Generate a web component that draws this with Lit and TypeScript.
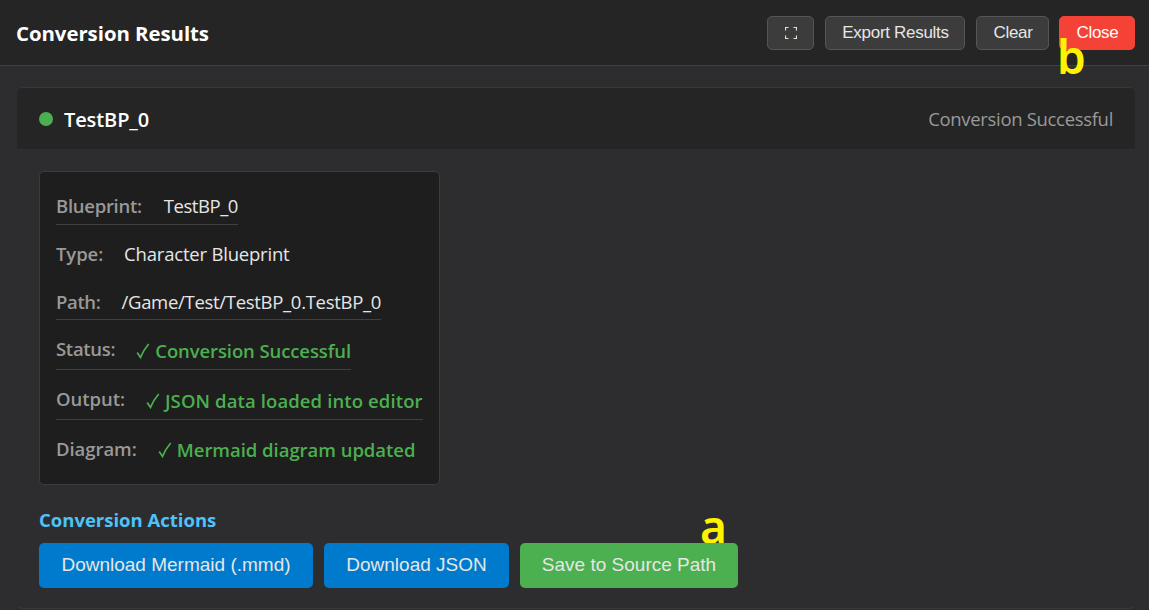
import { LitElement, html, css } from "lit";
import { customElement } from "lit/decorators.js";

interface Detail {
  key: string;
  label: string;
  value: string;
  ok?: boolean;
}

const DETAILS: Detail[] = [
  { key: "blueprint", label: "Blueprint:", value: "TestBP_0" },
  { key: "type", label: "Type:", value: "Character Blueprint" },
  { key: "path", label: "Path:", value: "/Game/Test/TestBP_0.TestBP_0" },
  { key: "status", label: "Status:", value: "Conversion Successful", ok: true },
  { key: "output", label: "Output:", value: "JSON data loaded into editor", ok: true },
  { key: "diagram", label: "Diagram:", value: "Mermaid diagram updated", ok: true },
];

@customElement("app-root")
export class AppRoot extends LitElement {
  static styles = css`
    :host { display: block; position: relative; height: 610px; overflow: hidden; background: #2d2d2f; color: #e8e8e8; font: 18.5px/24px "Open Sans", "Noto Sans", sans-serif; white-space: nowrap; }
    * { box-sizing: border-box; }
    button { font: 17px/20px "Liberation Sans", Arial, sans-serif; border: 0; margin: 0; padding: 0; border-radius: 5px; color: #e6e6e6; white-space: nowrap; }
    .top { height: 66px; padding: 16px 14px 0 16px; display: flex; align-items: flex-start; justify-content: space-between; background: #252525; border-bottom: 1px solid #404042; }
    .title { margin: 4px 0 0; font-size: 20.4px; line-height: 26px; font-weight: 700; color: #fff; letter-spacing: -0.05px; }
    .tools { display: flex; gap: 11px; }
    .tools button { height: 34px; padding: 0 0 1px 1px; background: #3c3c3c; border: 1px solid #555; letter-spacing: -0.3px; }
    .tools .full { width: 47px; display: grid; place-items: center; padding: 0 0 0 1px; }
    .tools .export { width: 140px; }
    .tools .clear { width: 73px; }
    .tools .close { width: 76px; margin-left: -1px; background: #f44336; border-color: #f44336; color: #fff; }
    .result { margin: 21px 14px 0 17px; height: 522px; border: 1px solid #39393b; border-radius: 6px; border-left-color: #2f2f31; border-right-color: #2f2f31; }
    .head { height: 61px; margin: 0 -1px; padding: 3px 22px 0 22px; display: flex; align-items: center; background: #252525; border-radius: 5px 5px 0 0; }
    .dot { width: 14px; height: 14px; border-radius: 50%; background: #4caf50; margin: 0 11px 3px 0; }
    .name { flex: 1; margin: 0; font-size: 20px; font-weight: 600; color: #fff; letter-spacing: -0.1px; }
    .state { color: #999; letter-spacing: -0.32px; padding-bottom: 2px; }
    .body { padding: 22px 21px 0; }
    .details { width: 401px; height: 314px; padding: 16px; display: flex; flex-direction: column; align-items: flex-start; gap: 11px; background: #1e1e1e; border: 1px solid #3c3c3e; border-radius: 5px; }
    .row { flex: none; display: flex; height: 37px; padding-top: 6px; border-bottom: 1px solid #404042; }
    .type, .diagram { border-bottom-color: transparent; }
    .path { height: 36px; }
    .status, .output { height: 39px; }
    .diagram { height: 36px; }
    .label { font-weight: 600; color: #999; margin-right: 21px; }
    .value { display: flex; color: #e6e6e6; }
    .blueprint .label { letter-spacing: -0.28px; margin-right: 22px; }
    .type .label { letter-spacing: -0.1px; }
    .path .label { letter-spacing: -0.35px; }
    .status .label { letter-spacing: -0.3px; }
    .output .label, .diagram .label { letter-spacing: -0.05px; }
    .blueprint .text { letter-spacing: -0.45px; }
    .type .text { letter-spacing: -0.2px; }
    .path .text { letter-spacing: -0.3px; }
    .status .text { letter-spacing: -0.1px; }
    .output .text { letter-spacing: 0.11px; }
    .diagram .text { letter-spacing: -0.03px; }
    .ok { color: #4caf50; font-weight: 600; padding-top: 2px; }
    .diagram .ok { padding-top: 1px; }
    .tick { width: 14px; height: 18px; margin: 3px 5px 0 0; }
    .sub { margin: 23px 0 11px; font-size: 18.5px; line-height: 24px; font-weight: 700; color: #4fc3f7; }
    .actions { display: flex; gap: 11px; }
    .actions button { height: 45px; background: #007acc; font-size: 19px; letter-spacing: 0; padding-bottom: 1px; }
    .actions .mermaid { width: 274px; }
    .actions .json { width: 185px; }
    .actions .save { width: 218px; background: #4caf50; position: relative; z-index: 1; }
    .mark { position: absolute; color: #fff200; font: 600 46px/54px "Noto Sans", sans-serif; }
    .mark-a { left: 700px; top: 499px; }
    .mark-b { left: 1057px; top: 29px; }
  `;

  private row(d: Detail) {
    return html`<div class="row ${d.key}">
      <span class="label">${d.label}</span>
      <span class="value ${d.ok ? "ok" : ""}">${d.ok
        ? html`<svg class="tick" viewBox="0 0 14 18"><path d="M1.2 10.5 L4.5 15.4 Q7.5 8 12.7 2" fill="none" stroke="currentColor" stroke-width="1.7"/></svg>`
        : ""}<span class="text">${d.value}</span></span>
    </div>`;
  }

  render() {
    return html`
      <header class="top">
        <h1 class="title">Conversion Results</h1>
        <div class="tools">
          <button class="full" aria-label="Full screen">
            <svg width="12" height="12" viewBox="0 0 12 12" fill="none" stroke="#e6e0d0" stroke-width="1.2"><path d="M.5 3.5v-3h3M8.5.5h3v3M11.5 8.5v3h-3M3.5 11.5h-3v-3"/></svg>
          </button>
          <button class="export">Export Results</button>
          <button class="clear">Clear</button>
          <button class="close">Close</button>
        </div>
      </header>
      <section class="result">
        <div class="head"><span class="dot"></span><h2 class="name">TestBP_0</h2><span class="state">Conversion Successful</span></div>
        <div class="body">
          <div class="details">${DETAILS.map((d) => this.row(d))}</div>
          <h3 class="sub">Conversion Actions</h3>
          <div class="actions">
            <button class="mermaid">Download Mermaid (.mmd)</button>
            <button class="json">Download JSON</button>
            <button class="save">Save to Source Path</button>
          </div>
        </div>
      </section>
      <span class="mark mark-a">a</span>
      <span class="mark mark-b">b</span>
    `;
  }
}
